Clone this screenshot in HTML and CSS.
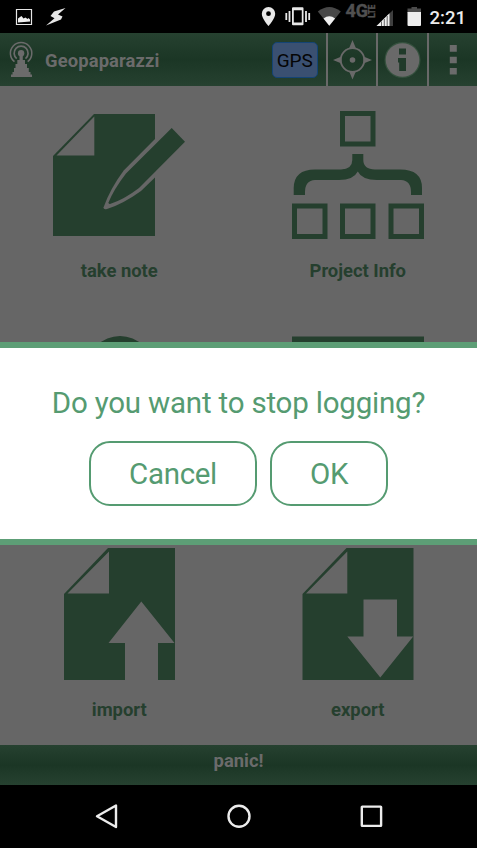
FILE: index.html
```html
<!DOCTYPE html>
<html lang="en">
<head>
<meta charset="utf-8">
<title>Geopaparazzi</title>
<link rel="stylesheet" href="styles.css">
</head>
<body>
<div class="phone">
  <header class="status">
    <svg class="left" width="70" height="33" viewBox="0 0 70 33">
      <path d="M16.500 9.500h15v15h-15z" fill="none" stroke="#e6e6e6" stroke-width="1.200"/>
      <path d="M18 22.500v-4l2-1.500 1.500-1 2 2.500 2-1 2 1.500 1-1 1.500 1.500v2z" fill="#eee"/>
      <path d="M65.500 8L54 11.500 50.500 16 54.500 18.200 46 25.500 61 19.500 62.500 16.500 58 14.500z" fill="#e6e6e6"/>
    </svg>
    <svg width="83" height="33" viewBox="260 0 83 33">
      <path fill="#e8e8e8" fill-rule="evenodd" d="M268.500 7a6.700 6.700 0 0 0-6.700 6.700c0 5 6.700 12.300 6.700 12.300s6.700-7.300 6.700-12.300A6.700 6.700 0 0 0 268.500 7zm0 4.300a2.400 2.400 0 1 1 0 4.800 2.400 2.400 0 0 1 0-4.800z"/>
      <path fill="#e8e8e8" fill-rule="evenodd" d="M293 7.300h9.500q1 0 1 1v16q0 1-1 1H293q-1 0-1-1v-16q0-1 1-1zm.8 3v12.200h8V10.300z"/>
      <path d="M286.300 13v7M289.500 11v11M306 11v11M309.200 13v7" stroke="#e8e8e8" stroke-width="1.800"/>
      <path d="M317.800 11.500Q329.300 2.500 340.800 11.500L329.300 25.700z" fill="#484848"/>
      <path d="M323.500 18.500Q329.300 14 335.100 18.500L329.300 25.700z" fill="#f0f0f0"/>
    </svg>
    <svg width="32" height="33" viewBox="343 0 32 33" class="net">
      <text x="345.500" y="17.300" font-size="17.500" textLength="22.500" lengthAdjust="spacingAndGlyphs">4G</text>
      <text transform="translate(375.300 17.800) rotate(-90)" font-size="9" textLength="13" lengthAdjust="spacingAndGlyphs">LTE</text>
    </svg>
    <svg width="50" height="33" viewBox="375 0 50 33">
      <path d="M376.500 26L393 10v16z" fill="#3e3e3e"/>
      <path d="M376.500 26L389.500 13.300V26z" fill="#eee"/>
      <path d="M381.500 21.500V26M384.300 19V26M387.200 16V26" stroke="#444" stroke-width=".8"/>
      <path d="M407.500 8.500h4V7h5.500v1.500h4V13h-13.500z" fill="#4b4b4b"/>
      <path d="M407.500 12h13.500v13q0 1-1 1h-11.500q-1 0-1-1z" fill="#eee"/>
    </svg>
    <span class="clock">2:21</span>
  </header>

  <div class="actionbar">
    <svg class="logo" width="25" height="53" viewBox="9 33 25 53">
      <g fill="none" stroke="#6b6b6b" stroke-width="1.500">
        <path d="M14.500 61.700a10.700 10.700 0 1 1 13.200 0"/>
        <path d="M16.700 58.600a7 7 0 1 1 8.800 0" stroke-width="1.700"/>
      </g>
      <circle cx="21.100" cy="53.200" r="3.200" fill="#6b6b6b"/>
      <path d="M19.500 54h3.300v6h2.200v4h2v4h1.800v4h1.700v2.500h1.500V77H11v-2.500h1.500V72h1.500v-4H15.500v-4h1.800v-4H19.500z" fill="#6b6b6b"/>
    </svg>
    <span class="apptitle">Geopaparazzi</span>
    <button class="gps">GPS</button>
    <div class="action">
      <svg width="48" height="53" viewBox="328 33 48 53">
        <circle cx="352.500" cy="60" r="11.800" fill="none" stroke="#696969" stroke-width="1.800"/>
        <circle cx="352.500" cy="60" r="2.800" fill="#696969"/>
        <path d="M352.500 40l3.500 8.500h-7zM352.500 79.500l3.500-8.500h-7zM333 60l8.500-3.500v7zM372 60l-8.500-3.500v7z" fill="#696969"/>
      </svg>
    </div>
    <div class="action">
      <svg width="48" height="53" viewBox="378.500 33 48 53">
        <circle cx="403" cy="60" r="18" fill="#35513e"/>
        <circle cx="403" cy="60" r="16.800" fill="#696969"/>
        <path d="M399.500 48.500h7v6h-7zM398.500 58h8v13h-6.800v-8.500h-1.200z" fill="#203a2a"/>
      </svg>
    </div>
    <div class="action">
      <svg width="48" height="53" viewBox="429 33 48 53">
        <path d="M449.800 45h7v6.700h-7zM449.800 56.700h7v6.600h-7zM449.800 68h7v6.500h-7z" fill="#6b6b6b"/>
      </svg>
    </div>
  </div>

  <main class="grid">
    <div class="cell">
      <svg width="132" height="132" viewBox="0 0 132 132">
        <path d="M41 5H102V127H0V47z" fill="#253f2e"/>
        <path d="M3.500 46.500L41.300 7.500v39z" fill="#666"/>
        <path d="M103 29L70.700 61.500Q57 80 50.500 98.500Q50.500 101 54 100Q70 95 88 82L103 67.500z" fill="#666"/>
        <path d="M118.700 19L73 64.500Q61 80 55.500 93.500Q55.500 95 57 95Q71 90.500 86 79L132 32.700z" fill="#253f2e"/>
      </svg>
      <span>take note</span>
    </div>
    <div class="cell">
      <svg width="132" height="132" viewBox="0 0 132 132">
        <g fill="none" stroke="#253f2e">
          <path d="M50.500 4.500h30.500v30.500h-30.500zM2.500 97h30.500v30.500h-30.500zM50.500 97h30.500v30.500h-30.500zM99 97h30.500v30.500h-30.500z" stroke-width="5"/>
        </g>
        <path d="M60.300 45H71.300V51Q71.300 60 83 60.500H107Q130 60 130 79V86H119V83Q119 71.500 109 71H85Q70 71 65.800 62.500Q61.500 71 47 71H23Q13 71.500 13 83V86H1.700V79Q2 60.500 23 60.500H49Q60.300 60 60.300 51z" fill="#253f2e"/>
      </svg>
      <span>Project Info</span>
    </div>
    <div class="cell">
      <svg width="132" height="132" viewBox="0 0 132 132"><ellipse cx="67" cy="40" rx="33" ry="33" fill="#253f2e"/></svg>
    </div>
    <div class="cell">
      <svg width="132" height="132" viewBox="0 0 132 132"><path d="M0 7.500h132V124H0z" fill="#253f2e"/></svg>
    </div>
    <div class="cell">
      <svg width="132" height="132" viewBox="0 0 132 132">
        <path d="M55 0H122V132H11V46z" fill="#253f2e"/>
        <path d="M14.500 45.500L56 3.500v42zM88.300 53.500L121.500 95H105V132H72V95H55.500z" fill="#666"/>
      </svg>
      <span>import</span>
    </div>
    <div class="cell">
      <svg width="132" height="132" viewBox="0 0 132 132">
        <path d="M54.500 0H121.500V132H10.500V46z" fill="#253f2e"/>
        <path d="M14 45.500L55.300 3.500v42zM71.500 51.500H105V88.500H121.200L88.300 129.500L55.300 88.500H71.500z" fill="#666"/>
      </svg>
      <span>export</span>
    </div>
  </main>

  <div class="panic">panic!</div>

  <nav class="nav">
    <svg width="132" height="63" viewBox="40.500 785 132 63"><path d="M96.500 816.300L115.500 805.500V827z"/></svg>
    <svg width="132" height="63" viewBox="172.500 785 132 63"><circle cx="238.500" cy="816.300" r="10.500"/></svg>
    <svg width="132" height="63" viewBox="304.500 785 132 63"><rect x="361.300" y="806.600" width="19.300" height="19.300" rx=".5"/></svg>
  </nav>

  <div class="dialog">
    <p>Do you want to stop logging?</p>
    <div class="buttons"><button class="cancel">Cancel</button><button class="ok">OK</button></div>
  </div>
</div>
</body>
</html>
```
FILE: styles.css
```css
* { box-sizing: border-box; }
body { margin: 0; background: #000; font-family: Roboto, sans-serif; }
button { font-family: inherit; padding: 0; margin: 0; }
svg { display: block; flex: none; }
.phone { position: relative; width: 477px; height: 848px; display: flex; flex-direction: column; overflow: hidden; }
.status { height: 33px; display: flex; align-items: center; background: #000; }
.status .left { margin-right: 190px; }
.net { overflow: visible; }
.net text { font-family: Roboto, sans-serif; font-weight: 700; fill: #505050; stroke: #505050; stroke-width: .4px; }
.clock { margin-left: 4.5px; padding-top: 2px; font-size: 18.6px; font-weight: 500; color: #ececec; }
.actionbar { height: 53px; display: flex; align-items: center; background: linear-gradient(#264130, #1b3625 50%, #264130); }
.logo { margin-left: 9px; }
.apptitle { margin-left: 11px; width: 227px; padding-top: 1px; font-size: 18.4px; letter-spacing: .12px; font-weight: 700; color: #6b6b6b; }
.gps { width: 46px; height: 36px; margin-right: 8.5px; border: 1.5px solid #144475; border-radius: 5px; background: #3a5071; color: #050505; font-size: 19px; padding-top: 1px; }
.action { width: 50.3px; height: 53px; border-left: 2px solid #696969; overflow: hidden; }
.grid { height: 658.5px; display: grid; grid-template-columns: 1fr 1fr; grid-template-rows: repeat(3, 219.5px); background: #666; }
.cell { display: flex; flex-direction: column; align-items: center; padding-top: 23px; gap: 18px; color: #253f2e; font-size: 18.4px; line-height: 24px; font-weight: 700; }
.panic { height: 40.5px; padding-top: 4px; text-align: center; font-size: 18.4px; line-height: 24px; font-weight: 700; color: #6b6b6b; background: linear-gradient(#264130, #1b3625 50%, #264130); }
.nav { height: 63px; display: flex; justify-content: center; background: #000; }
.nav svg { fill: none; stroke: #ececec; stroke-width: 2.4; stroke-linejoin: round; }
.dialog { position: absolute; left: 0; top: 342px; width: 477px; height: 203px; background: #fff; border: solid #5d9e76; border-width: 6px 0; display: flex; flex-direction: column; align-items: center; color: #559b71; }
.dialog p { margin: 37px 0 0; font-size: 29.5px; letter-spacing: -.2px; line-height: 36px; white-space: nowrap; }
.buttons { display: flex; gap: 13px; margin-top: 19.5px; }
.buttons button { height: 65px; border: 2.5px solid #559b71; border-radius: 21px; background: #fff; color: #559b71; font-size: 29.5px; letter-spacing: -.3px; padding-top: 2px; }
.buttons .cancel { width: 168px; }
.buttons .ok { width: 118px; }
```
